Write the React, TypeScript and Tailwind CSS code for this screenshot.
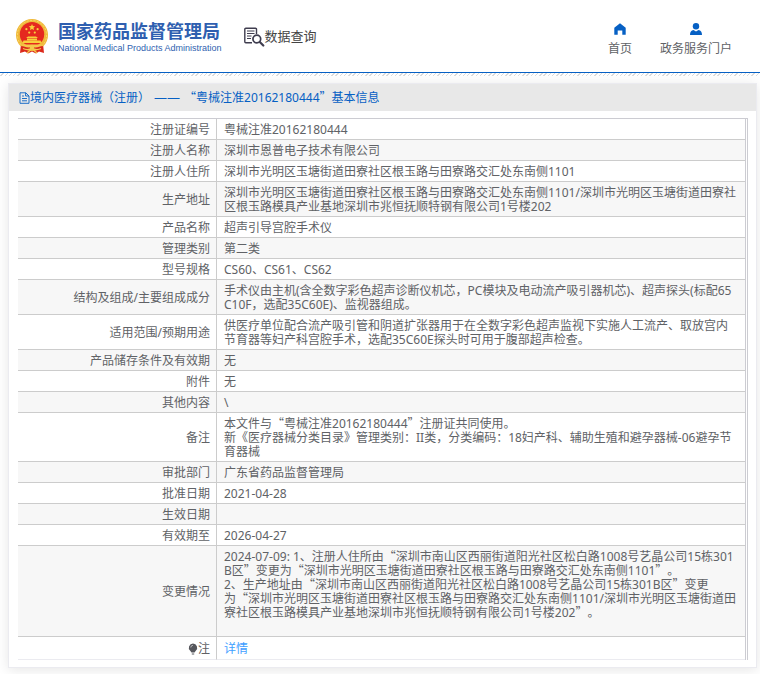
import React from 'react';

const RECORD_NO = '粤械注准20162180444';

// 注册信息，按显示顺序排列
const ROWS = [
  { label: '注册证编号', value: RECORD_NO },
  { label: '注册人名称', value: '深圳市恩普电子技术有限公司' },
  { label: '注册人住所', value: '深圳市光明区玉塘街道田寮社区根玉路与田寮路交汇处东南侧1101' },
  {
    label: '生产地址',
    value:
      '深圳市光明区玉塘街道田寮社区根玉路与田寮路交汇处东南侧1101/深圳市光明区玉塘街道田寮社区根玉路模具产业基地深圳市兆恒抚顺特钢有限公司1号楼202',
  },
  { label: '产品名称', value: '超声引导宫腔手术仪' },
  { label: '管理类别', value: '第二类' },
  { label: '型号规格', value: 'CS60、CS61、CS62' },
  {
    label: '结构及组成/主要组成成分',
    value:
      '手术仪由主机(含全数字彩色超声诊断仪机芯，PC模块及电动流产吸引器机芯)、超声探头(标配65C10F，选配35C60E)、监视器组成。',
  },
  {
    label: '适用范围/预期用途',
    value:
      '供医疗单位配合流产吸引管和阴道扩张器用于在全数字彩色超声监视下实施人工流产、取放宫内节育器等妇产科宫腔手术，选配35C60E探头时可用于腹部超声检查。',
  },
  { label: '产品储存条件及有效期', value: '无' },
  { label: '附件', value: '无' },
  { label: '其他内容', value: '\\' },
  {
    label: '备注',
    value:
      '本文件与“粤械注准20162180444”注册证共同使用。\n新《医疗器械分类目录》管理类别：II类，分类编码：18妇产科、辅助生殖和避孕器械-06避孕节育器械',
  },
  { label: '审批部门', value: '广东省药品监督管理局' },
  { label: '批准日期', value: '2021-04-28' },
  { label: '生效日期', value: '' },
  { label: '有效期至', value: '2026-04-27' },
  {
    label: '变更情况',
    value:
      '2024-07-09: 1、注册人住所由“深圳市南山区西丽街道阳光社区松白路1008号艺晶公司15栋301B区”变更为“深圳市光明区玉塘街道田寮社区根玉路与田寮路交汇处东南侧1101”。\n2、生产地址由“深圳市南山区西丽街道阳光社区松白路1008号艺晶公司15栋301B区”变更为“深圳市光明区玉塘街道田寮社区根玉路与田寮路交汇处东南侧1101/深圳市光明区玉塘街道田寮社区根玉路模具产业基地深圳市兆恒抚顺特钢有限公司1号楼202”。\n\n',
  },
];

// 引号用中文字体，保持全角宽度
function ZhText({ text }: { text: string }) {
  return (
    <>
      {text.split(/([“”]+)/).map((part, i) =>
        i % 2 ? (
          <span key={i} className="font-['Noto_Sans_CJK_SC',sans-serif] leading-none">
            {part}
          </span>
        ) : (
          part
        ),
      )}
    </>
  );
}

function Emblem() {
  return (
    <svg viewBox="0 0 32 35" className="h-[35px] w-8 shrink-0" aria-hidden="true">
      <path d="M5 25 4 34l5-1.5 3 2 4-2 4 2 3-2 5 1.5-1-9z" fill="#dc2a1c" />
      <circle cx="16" cy="16" r="16" fill="#f0b93a" />
      <circle cx="16" cy="16" r="14.6" fill="none" stroke="#f8d768" strokeWidth="1" strokeDasharray="2 1.5" />
      <circle cx="16" cy="15.2" r="12.2" fill="#e5281f" />
      <path d="m16 5 .9 2.1 2.3.2-1.7 1.5.5 2.3-2-1.2-2 1.2.5-2.3-1.7-1.5 2.3-.2z" fill="#f8cf3c" />
      <g fill="#f8cf3c">
        <circle cx="10.4" cy="10.2" r="1.1" />
        <circle cx="21.6" cy="10.2" r="1.1" />
        <circle cx="13.2" cy="13.6" r="1.1" />
        <circle cx="18.8" cy="13.6" r="1.1" />
        <path d="m10 19 2-1.5h8l2 1.5zM11 19.6h10v1.6H11zM7.5 21.6h17l1 2.4h-19z" />
      </g>
      <path d="M6 25.5h20l-3 4H9z" fill="#f5c94c" />
      <path d="M5 27c4 0 6 3 11 .5C21 30 23 27 27 27l-1 4c-4 .5-6 1-10-1-4 2-6 1.5-10 1z" fill="#d9271c" />
      <path d="M7 29.5c3 1.5 6 1.5 9-.5 3 2 6 2 9 .5M11 34l5-4.5 5 4.5" fill="none" stroke="#f5c94c" strokeWidth="1.3" />
      <circle cx="16" cy="28" r="2.3" fill="#f5c94c" />
    </svg>
  );
}

function SearchDocIcon() {
  return (
    <svg viewBox="0 0 21 20" className="h-5 w-[21px] shrink-0" fill="none" stroke="#3f3d4f" aria-hidden="true">
      <path d="M12.5 7V2.2a1 1 0 0 0-1-1H1.8a1 1 0 0 0-1 1v12.6a1 1 0 0 0 1 1H8" strokeWidth="1.4" />
      <path d="M3 4h7.5M3 6.5h7.5M3 9h4.5M3 11.5h4" strokeWidth="1" />
      <circle cx="12.8" cy="12" r="3.9" strokeWidth="1.7" fill="#fff" />
      <path d="m15.8 15 3.5 3.5" strokeWidth="2.2" strokeLinecap="round" />
    </svg>
  );
}

function HomeIcon() {
  return (
    <svg viewBox="0 0 12 12" className="h-3 w-3" fill="#0660c4" aria-hidden="true">
      <path d="M6 .2.3 4.8v7h3.4V7.5h4.6v4.3h3.4v-7z" />
    </svg>
  );
}

function UserIcon() {
  return (
    <svg viewBox="0 0 12 12" className="h-3 w-3" fill="#0660c4" aria-hidden="true">
      <circle cx="6" cy="3.2" r="3.2" />
      <path d="M0 12c0-3 1.2-4.7 3.5-5L6 8.5 8.5 7c2.3.3 3.5 2 3.5 5z" />
    </svg>
  );
}

function DocIcon() {
  return (
    <svg viewBox="0 0 11 12" className="h-3 w-[11px] shrink-0" fill="none" stroke="#0660c4" strokeWidth="0.9" aria-hidden="true">
      <path d="M1 .8h5.8L10 4v7.3H1zM6.6.8V4H10M3 4h2M3 6.5h5M3 8.8h5" />
    </svg>
  );
}

function BulbIcon() {
  return (
    <svg viewBox="0 0 10 12" className="h-3 w-2.5" aria-hidden="true">
      <path d="M5 .5a4.2 4.2 0 0 0-2.8 7.3L3.5 9.5h3l1.3-1.7A4.2 4.2 0 0 0 5 .5z" fill="#55565c" />
      <path d="M3.8 10.5h2.4v1H3.8z" fill="#55565c" />
      <path d="M2.8 4.5A2.3 2.3 0 0 1 5 2.3" fill="none" stroke="#ddd" strokeWidth="0.7" />
    </svg>
  );
}

export default function App() {
  return (
    <div className="min-h-screen bg-white font-['Noto_Sans','Noto_Sans_CJK_SC',sans-serif] text-xs text-[#606266] [text-spacing-trim:space-all]">
      <header className="flex h-[73px] items-center border-b border-[#0660c4] pr-7 pl-4">
        <a href="#home" className="flex items-center gap-2.5">
          <Emblem />
          <span className="flex flex-col text-[#2f5fb0]">
            <span className="font-['Noto_Sans_CJK_SC',sans-serif] text-[18px] leading-6 font-bold">国家药品监督管理局</span>
            <span className="font-['Liberation_Sans',sans-serif] text-[9px] leading-3">National Medical Products Administration</span>
          </span>
        </a>
        <div className="ml-[22px] flex items-center pt-0.5 text-[13px] text-[#444]">
          <SearchDocIcon />
          <span>数据查询</span>
        </div>
        <nav className="ml-auto flex gap-7 pt-2">
          <a href="#index" className="flex flex-col items-center gap-1.5">
            <HomeIcon />
            <span>首页</span>
          </a>
          <a href="#portal" className="flex flex-col items-center gap-1.5">
            <UserIcon />
            <span>政务服务门户</span>
          </a>
        </nav>
      </header>
      <div className="h-[3px] bg-[repeating-linear-gradient(135deg,#fff_0px,#fff_2px,#dcdcdc_2px,#dcdcdc_3px)]" />

      <main className="mt-[7px] mr-[3px] mb-1.5 ml-2 border border-[#ebebf0] bg-white shadow-[0_2px_12px_rgba(0,0,0,0.1)]">
        <h1 className="flex h-[27px] items-center bg-[#e8e8e8] pl-2.5 text-[#0660c4]">
          <DocIcon />
          <span className="flex items-baseline gap-1 leading-4">
            <span>境内医疗器械（注册）</span>
            <span className="text-[13px] leading-none">——</span>
            <span>
              <ZhText text={`“${RECORD_NO}”基本信息`} />
            </span>
          </span>
        </h1>

        <div className="mt-[7px] mr-2 mb-[7px] ml-[9px] border-t border-r-3 border-[#ccccd2] [border-right-style:double]">
          <table className="w-full table-fixed border-separate border-spacing-0 leading-[14px]">
            <colgroup>
              <col className="w-[199px]" />
              <col />
            </colgroup>
            <tbody>
              {ROWS.map((row) => (
                <tr key={row.label} className="even:bg-[#f7f7f7]">
                  <th scope="row" className="border-r border-b border-[#ccc] px-1.5 pt-1 pb-0.5 text-right font-normal">
                    {row.label}
                  </th>
                  <td className="border-b border-[#ccc] pt-1 pr-2 pb-0.5 pl-[7px] break-all whitespace-pre-line">
                    <ZhText text={row.value} />
                  </td>
                </tr>
              ))}
              <tr>
                <th scope="row" className="border-r border-b border-r-[#ccc] border-b-[#ebebf0] px-1.5 pt-[5px] pb-[3px] font-normal">
                  <span className="flex items-center justify-end">
                    <BulbIcon />注
                  </span>
                </th>
                <td className="border-b border-[#ebebf0] pt-[5px] pr-2 pb-[3px] pl-[7px]">
                  <a href="#detail" className="text-[#409eff]">详情</a>
                </td>
              </tr>
            </tbody>
          </table>
        </div>
      </main>
    </div>
  );
}
